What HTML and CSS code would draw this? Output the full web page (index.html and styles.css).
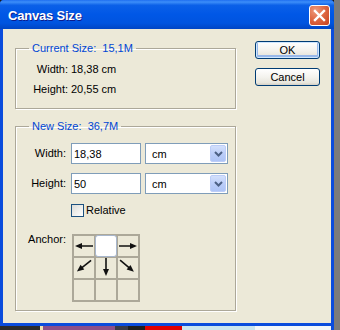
FILE: index.html
```html
<!DOCTYPE html>
<html lang="en">
<head>
    <meta charset="UTF-8">
    <meta name="viewport" content="width=device-width, initial-scale=1.0">
    <title>Canvas Size</title>
    <link rel="stylesheet" href="styles.css">
</head>
<body>
    <div class="screen">
        <div class="main">
            <div class="window">
                <div class="titlebar">
                    <span class="title">Canvas Size</span>
                    <span class="close">
                        <svg width="19" height="19" viewBox="0 0 19 19">
                            <path d="M5 5 L14 14 M14 5 L5 14" stroke="#fff" stroke-width="2.4" stroke-linecap="square"/>
                        </svg>
                    </span>
                </div>
                <div class="client">
                    <div class="groups">
                        <fieldset class="group group-current">
                            <legend>Current Size:&nbsp;&nbsp;15,1M</legend>
                            <div class="info-row"><span class="info-label">Width:</span><span>18,38 cm</span></div>
                            <div class="info-row"><span class="info-label">Height:</span><span>20,55 cm</span></div>
                        </fieldset>
                        <fieldset class="group group-new">
                            <legend>New Size:&nbsp;&nbsp;36,7M</legend>
                            <div class="field-row">
                                <span class="field-label">Width:</span>
                                <input class="text-input" type="text" value="18,38">
                                <div class="combo">
                                    <span class="combo-value">cm</span>
                                    <span class="combo-btn">
                                        <svg width="9" height="6" viewBox="0 0 9 6"><path d="M1 1 L4.5 4.5 L8 1" fill="none" stroke="#4d6185" stroke-width="2"/></svg>
                                    </span>
                                </div>
                            </div>
                            <div class="field-row">
                                <span class="field-label">Height:</span>
                                <input class="text-input" type="text" value="50">
                                <div class="combo">
                                    <span class="combo-value">cm</span>
                                    <span class="combo-btn">
                                        <svg width="9" height="6" viewBox="0 0 9 6"><path d="M1 1 L4.5 4.5 L8 1" fill="none" stroke="#4d6185" stroke-width="2"/></svg>
                                    </span>
                                </div>
                            </div>
                            <div class="check-row">
                                <span class="checkbox"></span>
                                <span>Relative</span>
                            </div>
                            <div class="anchor-row">
                                <span class="field-label anchor-label">Anchor:</span>
                                <div class="anchor-grid">
                                    <div class="cell"><svg viewBox="0 0 20 20"><g transform="translate(10 10) rotate(180)"><path d="M-9 0 L3 0" stroke="#111" stroke-width="1.6"/><path d="M9 0 L2 -3 L2 3 Z" fill="#111"/></g></svg></div>
                                    <div class="cell cell-active"></div>
                                    <div class="cell"><svg viewBox="0 0 20 20"><g transform="translate(10 10)"><path d="M-9 0 L3 0" stroke="#111" stroke-width="1.6"/><path d="M9 0 L2 -3 L2 3 Z" fill="#111"/></g></svg></div>
                                    <div class="cell"><svg viewBox="0 0 20 20"><g transform="translate(10 8) rotate(142)"><path d="M-9 0 L3 0" stroke="#111" stroke-width="1.6"/><path d="M9 0 L2 -3 L2 3 Z" fill="#111"/></g></svg></div>
                                    <div class="cell"><svg viewBox="0 0 20 20"><g transform="translate(10 9) rotate(90)"><path d="M-9 0 L3 0" stroke="#111" stroke-width="1.6"/><path d="M9 0 L2 -3 L2 3 Z" fill="#111"/></g></svg></div>
                                    <div class="cell"><svg viewBox="0 0 20 20"><g transform="translate(9 8) rotate(40)"><path d="M-9 0 L3 0" stroke="#111" stroke-width="1.6"/><path d="M9 0 L2 -3 L2 3 Z" fill="#111"/></g></svg></div>
                                    <div class="cell"></div>
                                    <div class="cell"></div>
                                    <div class="cell"></div>
                                </div>
                            </div>
                        </fieldset>
                    </div>
                    <div class="buttons">
                        <button class="btn btn-default">OK</button>
                        <button class="btn">Cancel</button>
                    </div>
                </div>
            </div>
            <div class="desktop">
                <span class="seg seg-dark"></span>
                <span class="seg seg-cream"></span>
                <span class="seg seg-purple"></span>
                <span class="seg seg-mix"></span>
                <span class="seg seg-black"></span>
                <span class="seg seg-red"></span>
                <span class="seg seg-cyan"></span>
                <span class="seg seg-white"></span>
                <span class="seg seg-blue"></span>
            </div>
        </div>
        <div class="edge"></div>
    </div>
</body>
</html>
```

FILE: styles.css
```css
body {
    margin: 0;
    background-color: #7f7f7f;
    font-family: "Liberation Sans", Arial, sans-serif;
    font-size: 11px;
    color: #000;
}
.screen {
    display: flex;
    width: 340px;
    height: 330px;
    overflow: hidden;
}
.main {
    width: 334px;
    display: flex;
    flex-direction: column;
    background-color: #1a1a1a;
}
.edge {
    flex: 1;
    background-color: #7b7b7b;
}
.window {
    height: 326px;
    flex: none;
    display: flex;
    flex-direction: column;
    background-color: #0a4cdd;
    border-radius: 4px 4px 0 0;
    overflow: hidden;
}
.titlebar {
    height: 29px;
    flex: none;
    box-sizing: border-box;
    display: flex;
    align-items: center;
    justify-content: space-between;
    padding: 1px 4px 0 8px;
    background: linear-gradient(to bottom, #1f6ff0 0%, #3d8ef9 7%, #0b60e8 18%, #0057e6 50%, #0054df 80%, #0045c4 100%);
}
.title {
    color: #fff;
    font-weight: bold;
    font-size: 13px;
    letter-spacing: -0.2px;
    text-shadow: 1px 1px 0 #0c1c8c;
}
.close {
    width: 21px;
    height: 21px;
    box-sizing: border-box;
    border: 1px solid #fff;
    border-radius: 3px;
    display: flex;
    align-items: center;
    justify-content: center;
    background: radial-gradient(circle at 30% 25%, #ee9a7c 0%, #df6a45 45%, #c8401c 100%);
}
.client {
    flex: 1;
    margin: 0 3px 3px;
    background-color: #ece9d8;
    display: flex;
    gap: 19px;
    padding: 12px 11px 0 12px;
}
.groups {
    width: 221px;
    display: flex;
    flex-direction: column;
    gap: 10px;
}
.group {
    margin: 0;
    border: 1px solid #aca899;
    box-shadow: inset 1px 1px 0 #fff, 1px 1px 0 #fff;
    padding: 0;
    min-width: 0;
}
.group legend {
    margin-left: 13px;
    padding: 0 3px;
    line-height: 14px;
    color: #0046d5;
    white-space: pre;
}
.group-current {
    padding: 8px 0 12px;
}
.info-row {
    display: flex;
    gap: 3px;
    line-height: 13px;
}
.info-row + .info-row {
    margin-top: 7px;
}
.info-label {
    width: 52px;
    text-align: right;
}
.group-new {
    padding: 10px 0 8px;
}
.field-row {
    display: flex;
    align-items: center;
    height: 21px;
}
.field-row + .field-row {
    margin-top: 9px;
}
.field-label {
    width: 50px;
    text-align: right;
    line-height: 13px;
    margin-right: 5px;
}
.text-input {
    width: 70px;
    height: 21px;
    box-sizing: border-box;
    border: 1px solid #7f9db9;
    padding: 0 2px;
    margin: 0 4px 0 0;
    font-family: "Liberation Sans", Arial, sans-serif;
    font-size: 11px;
    color: #000;
    background-color: #fff;
}
.combo {
    width: 83px;
    height: 21px;
    box-sizing: border-box;
    border: 1px solid #7f9db9;
    background-color: #fff;
    padding: 1px;
    display: flex;
    align-items: center;
}
.combo-value {
    flex: 1;
    padding-left: 5px;
}
.combo-btn {
    width: 16px;
    height: 17px;
    box-sizing: border-box;
    border: 1px solid #bccdf8;
    border-radius: 2px;
    background: linear-gradient(to bottom, #d3e0fc, #b8cbf8 60%, #aec4f6);
    display: flex;
    align-items: center;
    justify-content: center;
}
.check-row {
    display: flex;
    align-items: center;
    gap: 2px;
    margin-top: 10px;
    padding-left: 55px;
    line-height: 13px;
}
.checkbox {
    width: 13px;
    height: 13px;
    box-sizing: border-box;
    border: 1px solid #1c5180;
    background: linear-gradient(135deg, #dcdcd7, #fff);
}
.anchor-row {
    display: flex;
    margin-top: 17px;
}
.anchor-label {
    margin-right: 6px;
    margin-top: -1px;
}
.anchor-grid {
    display: grid;
    grid-template-columns: repeat(3, 20px);
    grid-template-rows: repeat(3, 20px);
    gap: 2px;
    padding: 2px;
    background-color: #aca899;
}
.cell {
    background-color: #ece9d8;
}
.cell svg {
    display: block;
    width: 20px;
    height: 20px;
}
.cell-active {
    margin: -1px;
    background-color: #fff;
    border: 1px solid #a7b6cc;
    border-radius: 3px;
}
.buttons {
    width: 65px;
    display: flex;
    flex-direction: column;
    gap: 9px;
}
.btn {
    width: 65px;
    height: 18px;
    padding: 0;
    border: 1px solid #003c74;
    border-radius: 3px;
    background: linear-gradient(to bottom, #fff 0%, #f4f3ee 50%, #e8e6dd 85%, #d6d0c5 100%);
    font-family: "Liberation Sans", Arial, sans-serif;
    font-size: 11px;
    color: #000;
}
.btn-default {
    box-shadow: inset 0 0 0 1px #cee7ff, inset 0 -1px 0 2px #98b8ea;
}
.desktop {
    flex: 1;
    display: flex;
}
.seg-dark { width: 40px; background-color: #2b2b2b; }
.seg-cream { width: 3px; background-color: #f0e2b4; }
.seg-purple { width: 72px; background-color: #8c4f88; }
.seg-mix { width: 13px; background-color: #3a3a46; }
.seg-black { width: 17px; background-color: #1e1e1e; }
.seg-red { width: 37px; background-color: #e00000; }
.seg-cyan { width: 73px; background-color: #cbe5ee; }
.seg-white { width: 76px; background-color: #f3f7f9; }
.seg-blue { width: 3px; background-color: #0a4cdd; }
```
